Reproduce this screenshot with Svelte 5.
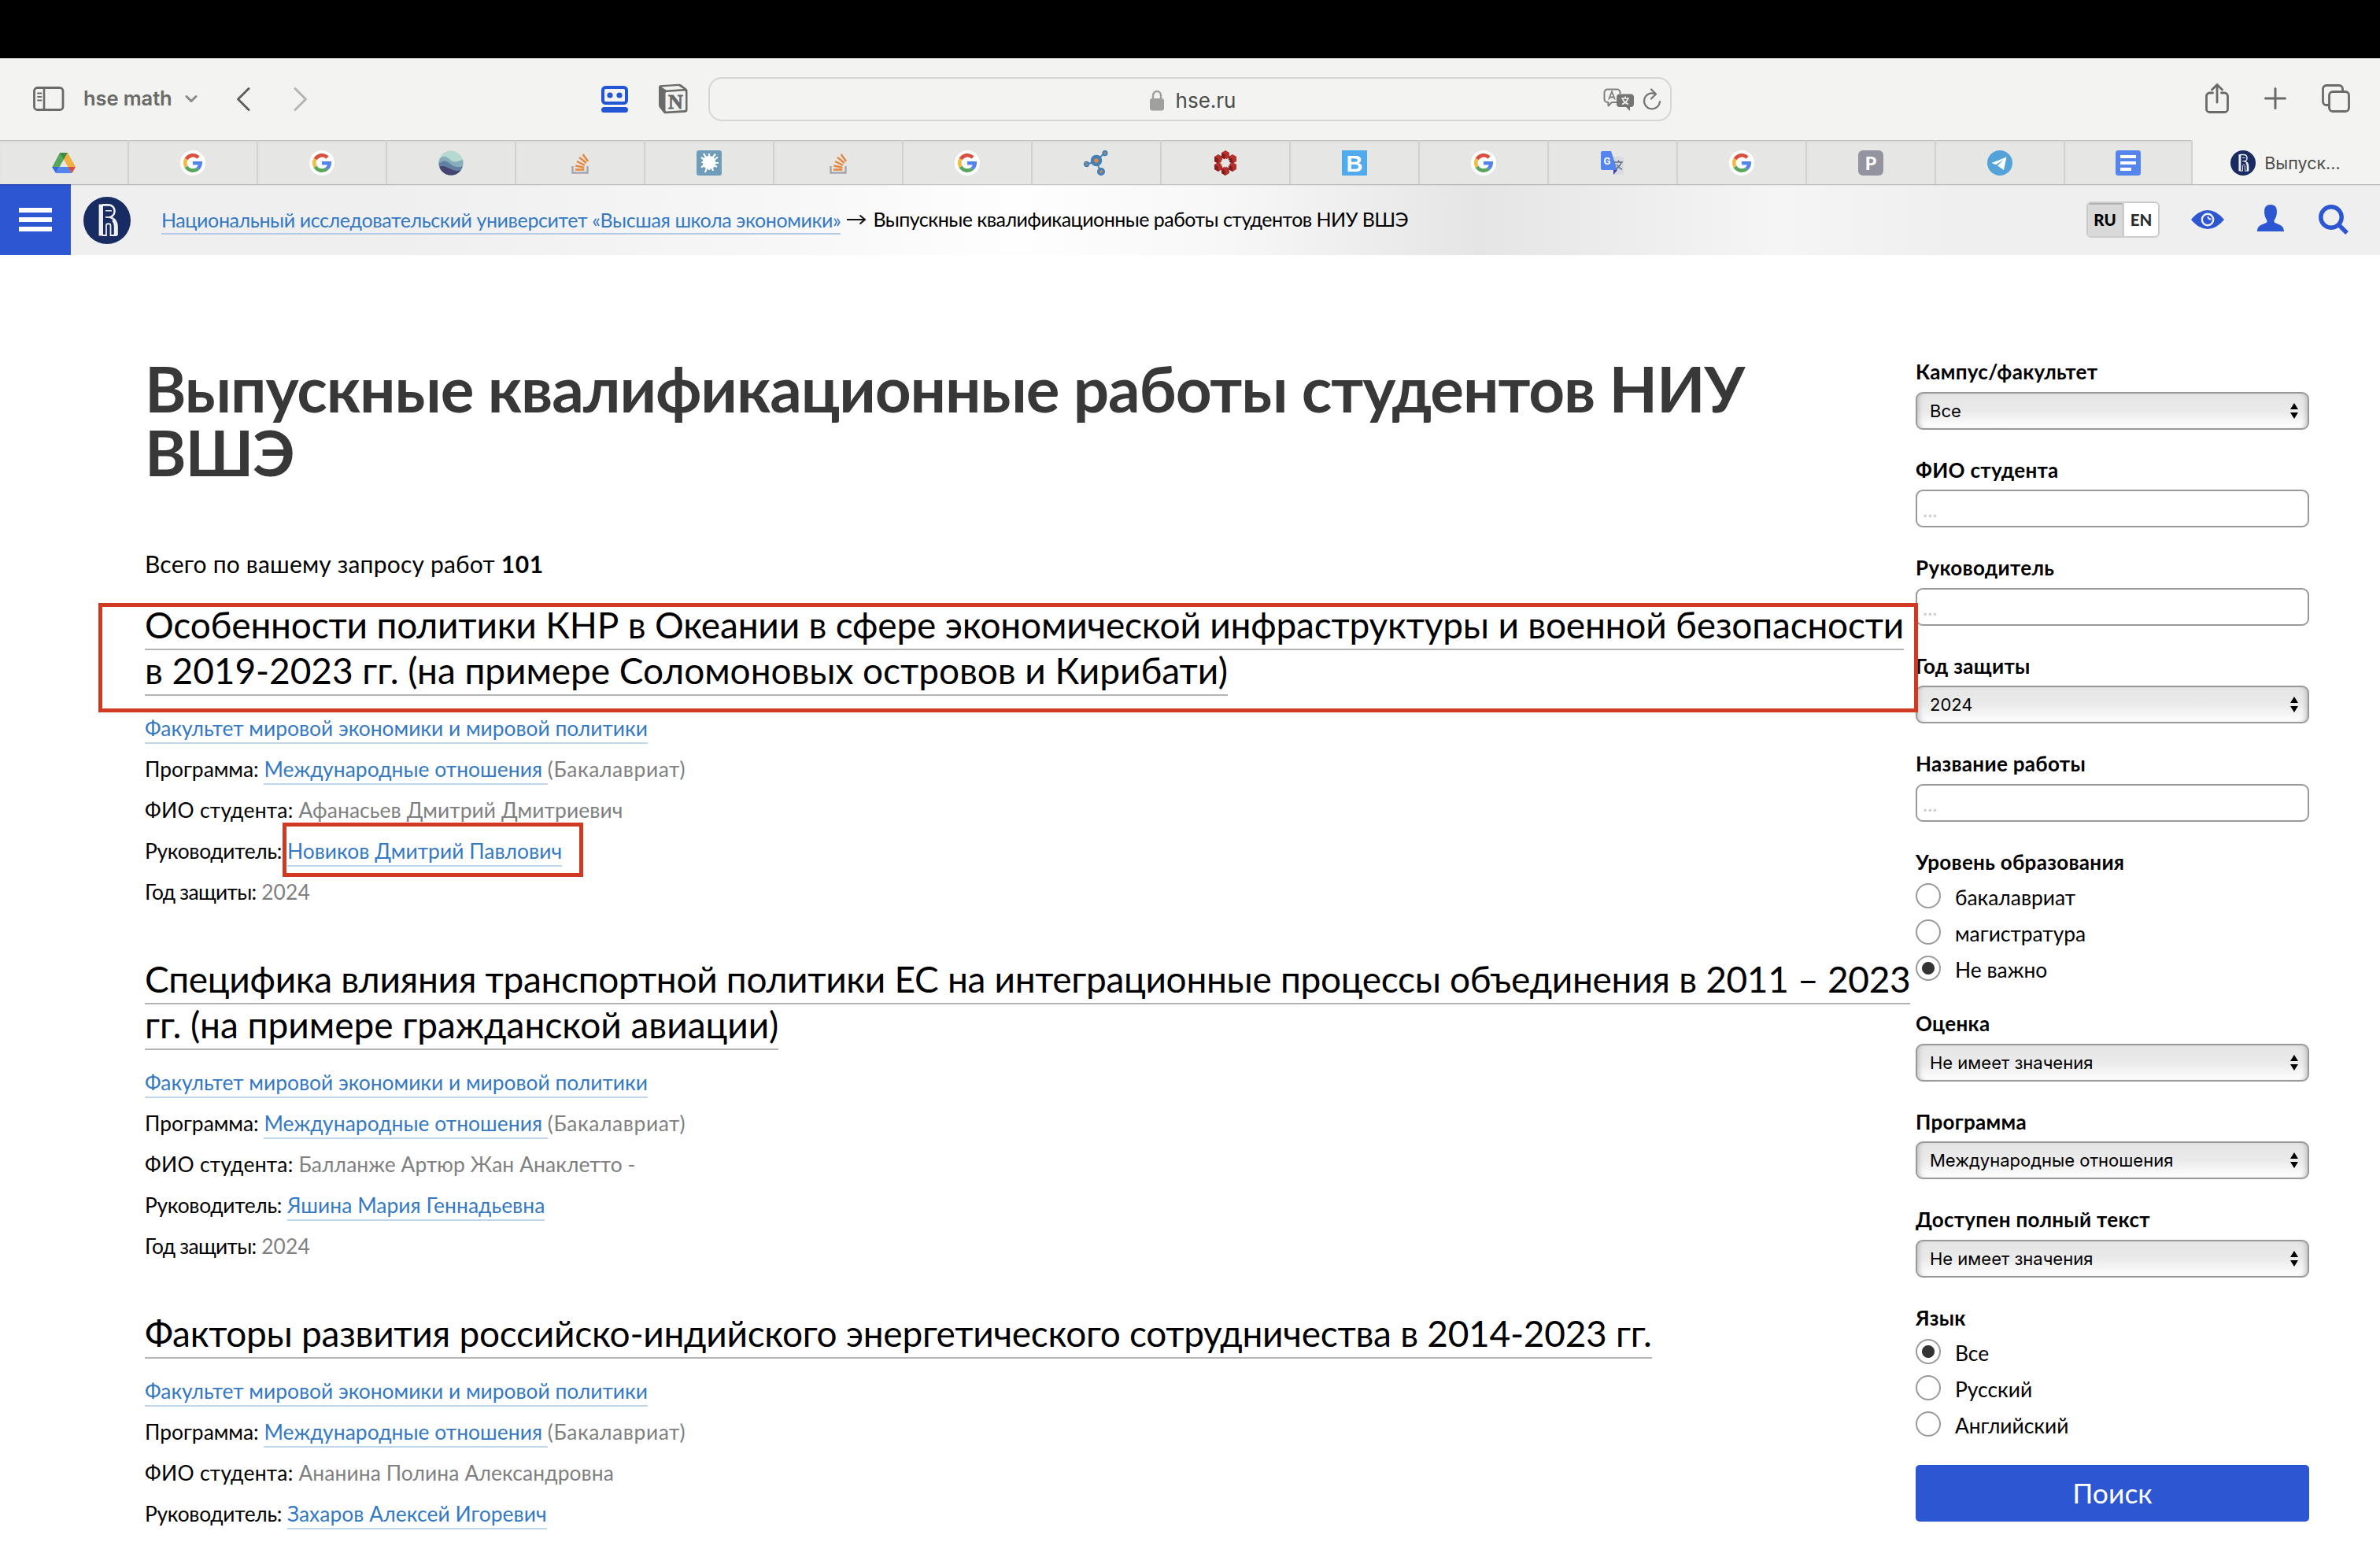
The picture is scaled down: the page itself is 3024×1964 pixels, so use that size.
<script>
  const tabs = ['drive', 'google', 'google', 'waves', 'stack', 'burst', 'stack', 'google', 'nodes', 'flower', 'letterB', 'google', 'translate', 'google', 'letterP', 'telegram', 'docs'];

  // Each title line carries its own tracking, in pixels.
  const works = [
    {
      title: [
        { text: 'Особенности политики КНР в Океании в сфере экономической инфраструктуры и военной безопасности', tracking: -0.19 },
        { text: 'в 2019-2023 гг. (на примере Соломоновых островов и Кирибати)', tracking: -0.05 }
      ],
      student: 'Афанасьев Дмитрий Дмитриевич',
      supervisor: 'Новиков Дмитрий Павлович',
      year: '2024',
      marked: true
    },
    {
      title: [
        { text: 'Специфика влияния транспортной политики ЕС на интеграционные процессы объединения в 2011 – 2023', tracking: -0.31 },
        { text: 'гг. (на примере гражданской авиации)', tracking: 0 }
      ],
      student: 'Балланже Артюр Жан Анаклетто -',
      supervisor: 'Яшина Мария Геннадьевна',
      year: '2024'
    },
    {
      title: [
        { text: 'Факторы развития российско-индийского энергетического сотрудничества в 2014-2023 гг.', tracking: -0.26 }
      ],
      student: 'Ананина Полина Александровна',
      supervisor: 'Захаров Алексей Игоревич'
    }
  ];

  const filters = [
    { label: 'Кампус/факультет', type: 'select', value: 'Все' },
    { label: 'ФИО студента', type: 'input' },
    { label: 'Руководитель', type: 'input' },
    { label: 'Год защиты', type: 'select', value: '2024' },
    { label: 'Название работы', type: 'input' },
    { label: 'Уровень образования', type: 'radio', options: ['бакалавриат', 'магистратура', 'Не важно'], checked: 2 },
    { label: 'Оценка', type: 'select', value: 'Не имеет значения' },
    { label: 'Программа', type: 'select', value: 'Международные отношения' },
    { label: 'Доступен полный текст', type: 'select', value: 'Не имеет значения' },
    { label: 'Язык', type: 'radio', options: ['Все', 'Русский', 'Английский'], checked: 0 }
  ];
</script>

{#snippet logo(size)}
  <svg width={size} height={size} viewBox="0 0 60 60">
    <circle cx="30" cy="30" r="30" fill="#182b63" />
    <g fill="none" stroke="#efefef">
      <path d="M22.300 9.500v40" stroke-width="5.400" />
      <path d="M24 10.400h7.500c10 0 10.500 13 2.500 15.500c6.500 2.500 8.500 6 8.500 12v11" stroke-width="2.600" />
      <path d="M28 17.800h8M28 25.900h7" stroke-width="1.600" />
      <path d="M24 49h5v-12.500c0-3 5.500-3 5.500 0V49h8" stroke-width="1.800" />
      <path d="M38 29c2.500 3 3 6 3 9v11" stroke-width="4.400" />
    </g>
  </svg>
{/snippet}

{#snippet favicon(name)}
  <svg width="32" height="32" viewBox="0 0 32 32">
    {#if name === 'drive'}
      <path d="M11 3h10l-5 8.500-6 10.500H1z" fill="#58a55c" />
      <path d="M11 3h10l-5 8.500z" fill="#3d8a47" />
      <path d="M21 3l10 18h-9.500L16 11.500z" fill="#f1b03f" />
      <path d="M1 21h9.500L6 29z" fill="#3569de" />
      <path d="M10 21h13l3 8H6z" fill="#5485ec" />
      <path d="M21.500 21H31l-4.500 8z" fill="#d8503f" />
    {:else if name === 'google'}
      <circle cx="16" cy="16" r="16" fill="#fff" />
      <g fill="none" stroke-width="4.600">
        <path d="M23 9.200A9.700 9.700 0 0 0 7.600 11.200" stroke="#d8503f" />
        <path d="M7.600 11.200A9.700 9.700 0 0 0 7.600 20.800" stroke="#f3bb40" />
        <path d="M7.600 20.800A9.700 9.700 0 0 0 22.200 23.400" stroke="#58a55c" />
        <path d="M16 16.200h9.700A9.700 9.700 0 0 1 22.200 23.400" stroke="#5485ec" />
      </g>
    {:else if name === 'waves'}
      <clipPath id="disc"><circle cx="16" cy="16" r="15.500" /></clipPath>
      <g clip-path="url(#disc)">
        <path d="M0 0h32v32H0z" fill="#b5d8d1" />
        <path d="M0 12c7-7 10-4 15 0s10 3 17-1v21H0z" fill="#88aebb" />
        <path d="M0 17c5-4 9-5 15 0s11 5 17 3v12H0z" fill="#6280a3" />
        <path d="M0 22c6-4 9-1 14 1s10 5 18 1v8H0z" fill="#45456f" />
      </g>
    {:else if name === 'stack'}
      <path d="M6.500 20v8.500h19V20" fill="none" stroke="#a2a5ad" stroke-width="2.400" />
      <path d="M10 24.500h11.500M10.300 19.500l11 2.300M12 14l10 4.800M15.200 9l8.600 7M19.600 5l6.500 9" stroke="#e6873c" stroke-width="2.400" />
    {:else if name === 'burst'}
      <rect width="32" height="32" rx="3" fill="#6e9cb9" />
      <circle cx="16" cy="15.500" r="8.400" fill="#fff" />
      <path d="M16 4v3M9 4l3.500 6M24 4.500L20 10M27 8.500l-5 4M28 16h-5M26 21l-4-2M21 26l-1.500-5M16 25l.500-4M11 28l2.500-7M6 21.500l5-3M6.500 15H10M6 9l5 3.500" stroke="#fff" stroke-width="2.200" />
    {:else if name === 'nodes'}
      <path d="M16 13L27 3M16 13L4 18M16 13l5 14" stroke="#4580b5" stroke-width="2" />
      <g fill="#e6873c" stroke="#4580b5">
        <circle cx="16" cy="13" r="5" stroke-width="4.500" />
        <circle cx="27" cy="3.500" r="2.400" stroke-width="2.500" />
        <circle cx="3.500" cy="17.500" r="2.400" stroke-width="2.500" />
        <circle cx="22" cy="27" r="3.400" stroke-width="3.300" />
      </g>
    {:else if name === 'flower'}
      <g fill="#b5302c">
        <path d="M16 0l5 3v6l-5 3-5-3V3zM16 20l5 3v6l-5 3-5-3v-6z" />
        <path d="M7 5l5 3v6l-5 3-5-3V8zM25 5l5 3v6l-5 3-5-3V8zM7 15l5 3v6l-5 3-5-3v-6zM25 15l5 3v6l-5 3-5-3v-6z" />
      </g>
      <path d="M16 6v6l-5-3V3zM7 11v6l-5-3V8zM25 11v6l-5-3V8zM7 21v6l-5-3v-6zM25 21v6l-5-3v-6zM16 26v6l-5-3v-6z" fill="#82201f" />
      <path d="M16 9.500l1.800 3.700 4.200-.700-2.300 3.500 2.300 3.500-4.200-.700L16 22.500l-1.800-3.700-4.200.700 2.300-3.500-2.300-3.500 4.200.700z" fill="#e6e6e4" />
    {:else if name === 'letterB'}
      <rect width="32" height="32" fill="#4fabee" />
      <text x="16" y="27" text-anchor="middle" class="fav-b">B</text>
    {:else if name === 'translate'}
      <path d="M13 8h15a2 2 0 0 1 2 2v19a2 2 0 0 1-2 2H18z" fill="#d9dbe0" />
      <path d="M17 25h5l-5 6z" fill="#3740a8" />
      <path d="M3 1h11l8 24H3a2 2 0 0 1-2-2V3a2 2 0 0 1 2-2z" fill="#5485ec" />
      <text x="9" y="17.500" text-anchor="middle" class="fav-g">G</text>
      <path d="M18 15h11M23.500 12.500V15M27 15c-1 4-4 7-7 9M21 17.500c1.500 3 4 5.500 7 7" fill="none" stroke="#60727e" stroke-width="1.500" />
    {:else if name === 'letterP'}
      <rect width="32" height="32" rx="6" fill="#9494a0" />
      <text x="16" y="24.500" text-anchor="middle" class="fav-p">P</text>
    {:else if name === 'telegram'}
      <circle cx="16" cy="16" r="16" fill="#53a3d8" />
      <path d="M24.500 8.500L5.500 16l5.500 2.200L20.500 12 13 19.500l8 5.500z" fill="#fff" />
    {:else if name === 'docs'}
      <rect width="32" height="32" rx="3.500" fill="#5485ec" />
      <path d="M6 8h20M6 16h20M6 24h14" stroke="#fff" stroke-width="4" />
    {/if}
  </svg>
{/snippet}

<div class="screen">
  <div class="notch-bar"></div>

  <div class="toolbar">
    <div class="tool-left">
      <svg width="40" height="32" viewBox="0 0 40 32" fill="none" stroke="#6a6a67">
        <rect x="1.500" y="1.500" width="36.500" height="28" rx="4" stroke-width="2.800" />
        <path d="M14 2v27" stroke-width="2.600" />
        <path d="M6 8.500h4.500M6 13h4.500M6 17.500h4.500" stroke-width="1.800" stroke-linecap="round" />
      </svg>
      <span class="profile">hse math</span>
      <svg class="chevron" width="16" height="12" viewBox="0 0 16 12"><path d="M2 2.500l6 6 6-6" fill="none" stroke="#8a8a88" stroke-width="3" stroke-linecap="round" stroke-linejoin="round" /></svg>
      <svg class="back" width="18" height="32" viewBox="0 0 18 32"><path d="M16 2.500L2.500 16 16 29.500" fill="none" stroke="#5f5f5d" stroke-width="3" stroke-linecap="round" stroke-linejoin="round" /></svg>
      <svg class="forward" width="18" height="32" viewBox="0 0 18 32"><path d="M2 2.500L15.500 16 2 29.500" fill="none" stroke="#b5b5b3" stroke-width="3" stroke-linecap="round" stroke-linejoin="round" /></svg>
      <svg class="bot" width="34" height="34" viewBox="0 0 34 34">
        <rect x="2" y="2" width="30" height="20" rx="3.500" fill="none" stroke="#2356d4" stroke-width="4" />
        <circle cx="11" cy="12" r="3.600" fill="#2356d4" />
        <circle cx="23" cy="12" r="3.600" fill="#2356d4" />
        <rect y="27" width="34" height="7" rx="3.500" fill="#2356d4" />
      </svg>
      <svg class="cube" width="38" height="39" viewBox="0 0 38 39">
        <path d="M1 4.500Q1 2.500 3 2.300L26 .700Q28 .500 29.500 1.600L36 6.500Q37.500 7.500 37.500 9v25q0 2.500-2.500 2.700L10 38.300Q8 38.400 7 37L2 30.500Q1 29 1 27.500z" fill="#6a6a67" />
        <path d="M4.500 4.500L26 3l6.500 4L10.500 8.500z" fill="#f3f4f2" />
        <path d="M9.500 12.500q0-1.500 1.500-1.600L33.500 9.500q1.500 0 1.500 1.500v21.500q0 1.500-1.500 1.600L11 35.500q-1.500 0-1.500-1.500z" fill="#f3f4f2" />
        <text x="22.500" y="31.500" text-anchor="middle" class="cube-n">N</text>
      </svg>
    </div>

    <div class="address">
      <div class="host">
        <svg width="18" height="27" viewBox="0 0 18 27"><path d="M4 12V7.500a5 5.500 0 0 1 10 0V12" fill="none" stroke="#a0a09e" stroke-width="2.400" /><rect y="11" width="18" height="15.500" rx="3" fill="#a0a09e" /></svg>
        <span>hse.ru</span>
      </div>
      <div class="address-tools">
        <svg width="40" height="30" viewBox="0 0 40 30">
          <path d="M17 18l-6 0-4.500 4.500V18H5.500A4 4 0 0 1 1.500 14V5.500a4 4 0 0 1 4-4h12a4 4 0 0 1 4 4V7" fill="none" stroke="#80807e" stroke-width="2" stroke-linejoin="round" />
          <path d="M7 14.500L11 4.500l4 10M8.500 11.500h5" fill="none" stroke="#80807e" stroke-width="1.800" />
          <path d="M21 7.500h14a4 4 0 0 1 4 4V20a4 4 0 0 1-4 4h-1v5l-5-5h-8a4 4 0 0 1-4-4v-8.500a4 4 0 0 1 4-4z" fill="#757573" />
          <path d="M23 13h10M28 10.500V13M31.500 13c-1 3.500-4 6-7.500 7.500M24.500 13c1 3.500 4 6 7.500 7.500" fill="none" stroke="#f3f4f2" stroke-width="1.700" />
        </svg>
        <svg width="24" height="30" viewBox="0 0 24 30"><path d="M15.500 7A10 10 0 1 0 22 17" fill="none" stroke="#757573" stroke-width="2.200" stroke-linecap="round" /><path d="M11 1.500l6 6-6 6" fill="none" stroke="#757573" stroke-width="2.200" stroke-linecap="round" stroke-linejoin="round" /></svg>
      </div>
    </div>

    <div class="tool-right">
      <svg width="30" height="38" viewBox="0 0 30 38" fill="none" stroke="#6a6a67" stroke-width="2.800" stroke-linecap="round" stroke-linejoin="round">
        <path d="M9.500 12H5.500a4 4 0 0 0-4 4v16.500a4 4 0 0 0 4 4h19a4 4 0 0 0 4-4V16a4 4 0 0 0-4-4H20.500" />
        <path d="M15 24V2M8.500 8L15 1.600 21.500 8" />
      </svg>
      <svg width="28" height="28" viewBox="0 0 28 28"><path d="M14 1.500v25M1.500 14h25" stroke="#6a6a67" stroke-width="3" stroke-linecap="round" /></svg>
      <svg width="36" height="36" viewBox="0 0 36 36" fill="none" stroke="#6a6a67" stroke-width="2.800" stroke-linejoin="round">
        <path d="M9 26.500H6a4.500 4.500 0 0 1-4.500-4.500V6A4.500 4.500 0 0 1 6 1.500h16A4.500 4.500 0 0 1 26.500 6v3" />
        <rect x="9.500" y="9.500" width="25" height="25" rx="4.500" />
      </svg>
    </div>
  </div>

  <div class="tabs">
    {#each tabs as tab}
      <div class="tab">{@render favicon(tab)}</div>
    {/each}
    <div class="tab-active">{@render logo(32)}<span>Выпуск...</span></div>
  </div>

  <header class="site-head">
    <button class="burger" aria-label="Меню"><i></i><i></i><i></i></button>
    <div class="site-logo">{@render logo(60)}</div>
    <nav class="crumbs">
      <a href="#top">Национальный исследовательский университет «Высшая школа экономики»</a>
      <svg width="26" height="16" viewBox="0 0 26 16"><path d="M1 8h22M17.500 2.500L24 8l-6.500 5.500" fill="none" stroke="#111" stroke-width="2" /></svg>
      <span>Выпускные квалификационные работы студентов НИУ ВШЭ</span>
    </nav>
    <div class="site-tools">
      <div class="lang"><b class="on">RU</b><b>EN</b></div>
      <svg class="eye" width="42" height="26" viewBox="0 0 42 26"><path d="M0 13Q10 1 21 1t21 12Q32 25 21 25T0 13z" fill="#2c56d2" /><circle cx="21" cy="13" r="7.200" fill="none" stroke="#efefef" stroke-width="2.400" /><path d="M21.500 9a3 3 0 0 0 4 3.200" fill="none" stroke="#efefef" stroke-width="2" /></svg>
      <svg class="user" width="34" height="34" viewBox="0 0 34 34"><path d="M17 0c5 0 8 3 7.800 7.500 0 2 .400 3.500-.400 6-.800 4-2.900 5.500-2.900 8 0 3.500 12.500 2 12.500 12.500H0C0 23.500 12.500 25 12.500 21.500c0-2.500-2.100-4-2.900-8-.800-2.500-.400-4-.400-6C9 3 12 0 17 0z" fill="#2c56d2" /></svg>
      <svg class="find" width="39" height="39" viewBox="0 0 39 39"><circle cx="16" cy="16" r="13.200" fill="none" stroke="#2c56d2" stroke-width="5.400" /><path d="M25.500 25.500L36 36" stroke="#2c56d2" stroke-width="5.400" /></svg>
    </div>
  </header>

  <div class="page">
    <main>
      <h1>Выпускные квалификационные работы студентов НИУ<br />ВШЭ</h1>
      <p class="total">Всего по вашему запросу работ <b>101</b></p>

      {#each works as work}
        <article>
          <h2>
            {#each work.title as line}
              <span class="title-line" style:letter-spacing="{line.tracking}px"><a href="#work">{line.text}</a></span>
            {/each}
          </h2>
          <p><a href="#faculty" class="faculty">Факультет мировой экономики и мировой политики</a></p>
          <p>Программа: <a href="#program">Международные отношения&nbsp;</a><em class="level">(Бакалавриат)</em></p>
          <p><span class="student">ФИО студента:</span> <em>{work.student}</em></p>
          <p><span class="role">Руководитель:</span> <a href="#person">{work.supervisor}</a></p>
          {#if work.year}
            <p><span class="year">Год защиты:</span> <em>{work.year}</em></p>
          {/if}
          {#if work.marked}
            <div class="mark mark-title"></div>
            <div class="mark mark-person"></div>
          {/if}
        </article>
      {/each}
    </main>

    <aside>
      {#each filters as f}
        <section class={f.type}>
          <h3>{f.label}</h3>
          {#if f.type === 'select'}
            <div class="box picker">
              <span>{f.value}</span>
              <svg width="10" height="20" viewBox="0 0 10 20"><path d="M5 0l5 8H0zM5 20l5-8H0z" /></svg>
            </div>
          {:else if f.type === 'input'}
            <div class="box field">...</div>
          {:else}
            <div class="options">
              {#each f.options as option, i}
                <div class="option"><i class:checked={i === f.checked}></i><span>{option}</span></div>
              {/each}
            </div>
          {/if}
        </section>
      {/each}
      <button class="submit">Поиск</button>
    </aside>
  </div>
</div>

<style>
  :global(body) { margin: 0; background: #fff; }
  .screen {
    width: 3024px;
    height: 1964px;
    overflow: hidden;
    background: #fff;
    color: #000;
    font-family: Lato, 'Liberation Sans', sans-serif;
  }
  .screen :global(svg) { display: block; flex: none; }
  button { border: 0; padding: 0; font: inherit; }

  .notch-bar { height: 74px; background: #000; }

  .toolbar {
    display: grid;
    grid-template-columns: 900px 1224px 1fr;
    align-items: center;
    box-sizing: border-box;
    height: 104px;
    background: #f3f4f2;
    font-family: Inter, 'Liberation Sans', sans-serif;
  }
  .tool-left { display: flex; align-items: center; padding: 0 0 1px 42px; }
  .profile { width: 129px; margin-left: 24px; padding-bottom: 2px; font-size: 25.500px; font-weight: 600; letter-spacing: -.1px; color: #6a6a67; white-space: nowrap; }
  .back { margin-left: 49px; }
  .forward { margin-left: 55px; }
  .bot { margin-left: 373px; }
  .cube { margin-left: 38px; }
  .cube-n { font: 700 26px 'Liberation Serif', serif; fill: #6a6a67; stroke: #6a6a67; stroke-width: .8px; }
  .address {
    display: grid;
    grid-template-columns: 1fr auto 1fr;
    align-items: center;
    box-sizing: border-box;
    height: 56px;
    border: 2px solid #d6d6d4;
    border-radius: 17px;
  }
  .host { grid-column: 2; display: flex; align-items: center; gap: 15px; margin-left: 7px; padding-top: 2px; font-size: 26px; color: #4b4b49; }
  .address-tools { display: flex; justify-content: flex-end; align-items: center; gap: 10px; padding: 2px 11px 0 0; }
  .tool-right { display: flex; align-items: center; justify-content: flex-end; gap: 45px; padding: 0 38px 3px 0; }

  .tabs {
    position: relative;
    display: flex;
    height: 56px;
    background: #e6e6e4;
    box-shadow: 0 1px 0 rgba(0, 0, 0, .18), 0 2px 0 rgba(0, 0, 0, .05);
  }
  .tab {
    flex: none;
    display: flex;
    align-items: center;
    justify-content: center;
    box-sizing: border-box;
    width: 164px;
    padding-top: 2px;
    border-right: 2px solid #d2d2d0;
    box-shadow: inset 0 1px 0 #c2c2c0, inset 0 3px 3px -1px #d6d6d4;
  }
  .tab:nth-last-child(2) { width: 162px; }
  .tab-active {
    flex: 1;
    display: flex;
    align-items: center;
    justify-content: center;
    gap: 11px;
    padding: 2px 2px 0 0;
    background: #f3f4f2;
    color: #4b4b49;
    font: 21.500px Inter, 'Liberation Sans', sans-serif;
  }
  .fav-b { font: 700 29px/1 'Liberation Sans', sans-serif; fill: #fff; }
  .fav-g { font: 700 13px Roboto, sans-serif; fill: #fff; }
  .fav-p { font: 900 23px Lato, sans-serif; fill: #fff; }

  .site-head {
    display: flex;
    align-items: center;
    height: 90px;
    background: linear-gradient(90deg, #efefef 0, #efefef 500px, #f7f7f7 1000px, #fefefe 1290px, #f7f7f7 1560px, #e5e5e5 1880px, #f5f5f5 2260px, #efefef 2480px);
  }
  .burger { display: flex; flex-direction: column; align-items: center; justify-content: center; gap: 6px; width: 90px; height: 90px; background: #2c56d2; }
  .burger i { width: 42px; height: 6px; background: #fff; }
  .site-logo { margin-left: 16px; padding-top: 2px; }
  .crumbs { display: flex; align-items: center; margin-left: 39px; font-size: 25px; line-height: 40px; white-space: nowrap; letter-spacing: -.39px; }
  .crumbs svg { margin: 0 8px 0 7px; }
  .crumbs a { border-bottom: 2px solid #b4cbe5; line-height: 30px; padding: 3px 0 2px; }
  .crumbs span { letter-spacing: -.53px; padding-bottom: 2px; }
  a { color: #3479c3; text-decoration: none; }
  .site-tools { display: flex; align-items: center; margin-left: auto; padding-right: 39px; }
  .lang { display: flex; box-sizing: border-box; width: 93px; height: 46px; border: 2px solid #ccc; border-radius: 6px; overflow: hidden; font-size: 20.500px; line-height: 42px; background: #fff; color: #2e2e2e; }
  .lang b { flex: 1; text-align: center; font-weight: 900; }
  .lang .on { flex: none; width: 46px; box-sizing: border-box; border-right: 3px solid #ccc; background: #d9d9d9; color: #000; box-shadow: inset 0 2px 0 #b4b4b8; }
  .eye { margin-left: 40px; }
  .user { margin-left: 42px; margin-top: -4px; }
  .find { margin-left: 44px; }

  .page { display: grid; grid-template-columns: 2250px 500px; padding-left: 184px; }
  main { padding-top: 129px; }
  h1 { margin: 0 0 81px; font-size: 80px; line-height: 81px; letter-spacing: -1.100px; color: #383838; white-space: nowrap; }
  .total { margin: 0 0 29px; font-size: 30px; line-height: 40px; letter-spacing: .200px; }
  .total b { letter-spacing: .6px; }
  article { position: relative; margin-bottom: 56px; }
  h2 { margin: 0 0 18px; font-size: 46px; font-weight: 400; line-height: 58px; white-space: nowrap; }
  .title-line { display: block; }
  h2 a { color: #000; border-bottom: 2px solid #b3b3b3; padding-bottom: 3px; }
  article p { margin: 0; font-size: 26.400px; line-height: 52px; }
  article p a { border-bottom: 2px solid #c0d6ec; padding-bottom: 2px; letter-spacing: .05px; }
  article .faculty { letter-spacing: 0; }
  .role { letter-spacing: -.3px; }
  .student { letter-spacing: .3px; }
  .year { letter-spacing: -.7px; }
  em { font-style: normal; color: #808080; letter-spacing: .1px; }
  .level { letter-spacing: .6px; }
  .mark { position: absolute; box-sizing: border-box; border: 5px solid #d13a22; }
  .mark-title { left: -59px; top: 1px; width: 2312px; height: 139px; }
  .mark-person { left: 175px; top: 280px; width: 382px; height: 69px; }

  aside { padding-top: 132px; }
  h3 { margin: 0; font-size: 26px; line-height: 32px; letter-spacing: .3px; }
  section { margin-bottom: 35px; }
  .box { box-sizing: border-box; height: 48px; margin-top: 9.500px; border: 2px solid #999; border-radius: 9px; }
  .picker {
    display: flex;
    align-items: center;
    justify-content: space-between;
    padding: 0 12px 0 16px;
    background: linear-gradient(#e5e5e5, #eaeaea 50%, #fff);
    box-shadow: inset 6px 0 6px -4px #bdbdbd, inset -6px 0 6px -4px #bdbdbd;
    font: 22px Inter, 'Liberation Sans', sans-serif;
  }
  .field { padding: 7px 7px 0; line-height: 32px; font-size: 26px; color: #ccc; }
  .radio { margin-bottom: 31.500px; }
  .options { padding-top: 4px; }
  .option { display: flex; align-items: center; gap: 18px; height: 46px; font-size: 26.400px; }
  .option span { padding-top: 4px; }
  .option i { box-sizing: border-box; width: 32px; height: 32px; border: 2px solid #999; border-radius: 50%; background: #fff; }
  .option .checked { background: radial-gradient(circle, #333 7.500px, #fff 8.500px); }
  .submit { display: block; width: 500px; height: 72px; border-radius: 5px; margin-top: -2px; padding-bottom: 2px; background: #2c56d2; color: #fff; font-size: 35.500px; }
</style>
